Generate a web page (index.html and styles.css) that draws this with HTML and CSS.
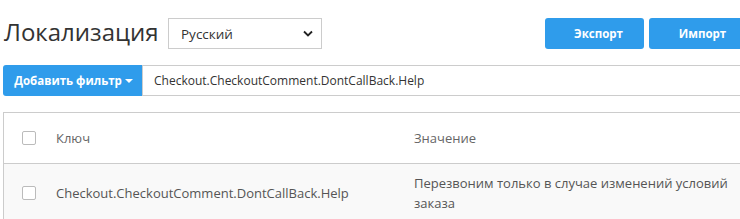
FILE: index.html
```html
<!DOCTYPE html>
<html>
<head>
  <title>Локализация</title>
  <link rel="stylesheet" href="styles.css">
</head>
<body>
  <div class="page">
    <div class="top">
      <h1>Локализация</h1>
      <div class="select">
        <span>Русский</span>
        <svg width="10" height="7" viewBox="0 0 10 7"><path d="M1 1.5l4 4 4-4" fill="none" stroke="#222" stroke-width="1.8"/></svg>
      </div>
      <div class="actions">
        <button class="btn">Экспорт</button>
        <button class="btn">Импорт</button>
      </div>
    </div>

    <div class="filter">
      <button class="btn add">Добавить фильтр <span class="caret"></span></button>
      <div class="search">Checkout.CheckoutComment.DontCallBack.Help</div>
    </div>

    <div class="grid">
      <div class="row head">
        <div class="cell check"><span class="box"></span></div>
        <div class="cell key">Ключ</div>
        <div class="cell value">Значение</div>
      </div>
      <div class="row odd">
        <div class="cell check"><span class="box"></span></div>
        <div class="cell key">Checkout.CheckoutComment.DontCallBack.Help</div>
        <div class="cell value">Перезвоним только в случае изменений условий заказа</div>
      </div>
    </div>
  </div>
</body>
</html>
```

FILE: styles.css
```css
body {
  margin: 0;
  font-family: "Open Sans", Arial, sans-serif;
  color: #333;
  background: #fff;
  overflow: hidden;
}
.page {
  width: 800px;
  padding: 18px 0 0 3px;
}
.top {
  display: flex;
  align-items: flex-start;
  height: 47px;
}
h1 {
  margin: -3px 0 0 1px;
  font-size: 24px;
  font-weight: normal;
  line-height: 34px;
  color: #333;
  width: 164px;
}
.select {
  box-sizing: border-box;
  width: 154px;
  height: 31px;
  border: 1px solid #ccc;
  display: flex;
  align-items: center;
  justify-content: space-between;
  padding: 0 8px 0 12px;
  font-size: 13.5px;
  color: #333;
}
.actions {
  display: flex;
  gap: 5px;
  margin-left: 223px;
}
.btn {
  border: none;
  background: #2f9ceb;
  color: #fff;
  font-family: "Open Sans", Arial, sans-serif;
  font-weight: bold;
  font-size: 11.5px;
  border-radius: 3px;
  cursor: pointer;
}
.actions .btn {
  width: 99px;
  height: 31px;
  padding: 0 0 0 8px;
}
.filter {
  display: flex;
  height: 31px;
}
.add {
  width: 139px;
  height: 31px;
  border-radius: 3px 0 0 3px;
  padding: 0 0 0 2px;
}
.caret {
  display: inline-block;
  width: 0;
  height: 0;
  border-left: 4px solid transparent;
  border-right: 4px solid transparent;
  border-top: 4px solid #fff;
  vertical-align: 2px;
}
.search {
  flex: 1;
  box-sizing: border-box;
  border: 1px solid #ccc;
  border-right: none;
  padding: 0 11px;
  display: flex;
  align-items: center;
  font-size: 12px;
  color: #333;
}
.grid {
  margin-top: 16px;
  border-top: 1px solid #ccc;
  border-left: 1px solid #ccc;
}
.row {
  display: flex;
  border-bottom: 1px solid #ccc;
  font-size: 13px;
}
.head {
  height: 50px;
  color: #666;
  align-items: center;
}
.odd {
  background: #f9f9f9;
  color: #555;
  align-items: center;
  padding: 9px 0;
}
.cell {
  box-sizing: border-box;
}
.check {
  width: 52px;
  padding-left: 18px;
  display: flex;
}
.box {
  box-sizing: border-box;
  width: 14px;
  height: 14px;
  border: 1px solid #bbb;
  border-radius: 2px;
  background: #fff;
}
.key {
  width: 358px;
}
.value {
  width: 340px;
  line-height: 20px;
}
```
